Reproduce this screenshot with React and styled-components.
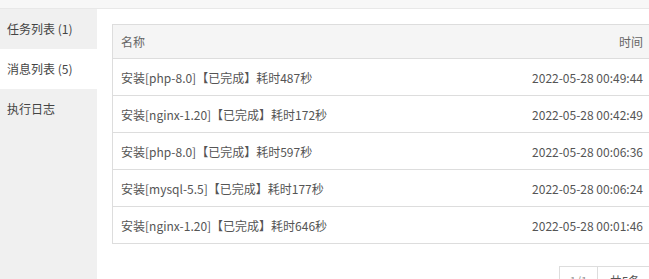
import React from "react";
import styled, { createGlobalStyle } from "styled-components";

const GlobalStyle = createGlobalStyle`
  html, body {
    margin: 0;
    padding: 0;
    background: #fff;
    overflow: hidden;
  }
  body {
    font-family: "Noto Sans CJK SC", "Noto Sans", sans-serif;
    font-size: 12px;
    color: #333;
  }
`;

const messages = [
  { name: "安装[php-8.0]【已完成】耗时487秒", time: "2022-05-28 00:49:44" },
  { name: "安装[nginx-1.20]【已完成】耗时172秒", time: "2022-05-28 00:42:49" },
  { name: "安装[php-8.0]【已完成】耗时597秒", time: "2022-05-28 00:06:36" },
  { name: "安装[mysql-5.5]【已完成】耗时177秒", time: "2022-05-28 00:06:24" },
  { name: "安装[nginx-1.20]【已完成】耗时646秒", time: "2022-05-28 00:01:46" },
];

const tabs = [
  { label: "任务列表 (1)", active: false },
  { label: "消息列表 (5)", active: true },
  { label: "执行日志", active: false },
];

const App = () => {
  return (
    <Page>
      <GlobalStyle />
      <TopStrip />
      <Body>
        <Sidebar>
          {tabs.map((t) => (
            <TabItem key={t.label} $active={t.active}>
              {t.label}
            </TabItem>
          ))}
        </Sidebar>
        <Content>
          <Table>
            <thead>
              <tr>
                <HeadCell>名称</HeadCell>
                <HeadCell $right>时间</HeadCell>
              </tr>
            </thead>
            <tbody>
              {messages.map((m) => (
                <tr key={m.time}>
                  <Cell>{m.name}</Cell>
                  <Cell $right>{m.time}</Cell>
                </tr>
              ))}
            </tbody>
          </Table>
          <Pager>
            <PageBox $muted $width={39}>1/1</PageBox>
            <PageBox $width={56}>共5条</PageBox>
          </Pager>
        </Content>
      </Body>
    </Page>
  );
};

export default App;

const Page = styled.div`
  width: 649px;
  height: 279px;
  overflow: hidden;
  display: flex;
  flex-direction: column;
`;

const TopStrip = styled.div`
  height: 8px;
  background: #f7f7f7;
  border-bottom: 1px solid #e8e8e8;
  flex-shrink: 0;
`;

const Body = styled.div`
  flex: 1;
  display: flex;
`;

const Sidebar = styled.div`
  width: 97px;
  background: #f0f0f0;
  flex-shrink: 0;
`;

const TabItem = styled.div`
  height: 40px;
  line-height: 40px;
  padding-left: 7px;
  color: #444;
  background: ${(p) => (p.$active ? "#fff" : "transparent")};
  white-space: nowrap;
`;

const Content = styled.div`
  padding: 15px 0 0 15px;
  flex: 1;
`;

const Table = styled.table`
  width: 540px;
  border-collapse: collapse;
  border: 1px solid #ddd;
`;

const HeadCell = styled.th`
  height: 33px;
  padding: 0 8px;
  background: #f5f5f5;
  border-bottom: 1px solid #ddd;
  font-weight: normal;
  color: #666;
  text-align: ${(p) => (p.$right ? "right" : "left")};
`;

const Cell = styled.td`
  height: 36px;
  padding: 0 8px;
  border-top: 1px solid #ddd;
  color: #555;
  white-space: nowrap;
  text-align: ${(p) => (p.$right ? "right" : "left")};
`;

const Pager = styled.div`
  width: 541px;
  margin-top: 22px;
  display: flex;
  justify-content: flex-end;
`;

const PageBox = styled.div`
  box-sizing: border-box;
  width: ${(p) => p.$width}px;
  height: 30px;
  line-height: 28px;
  text-align: center;
  border: 1px solid #ddd;
  margin-left: -1px;
  color: ${(p) => (p.$muted ? "#999" : "#555")};
`;
